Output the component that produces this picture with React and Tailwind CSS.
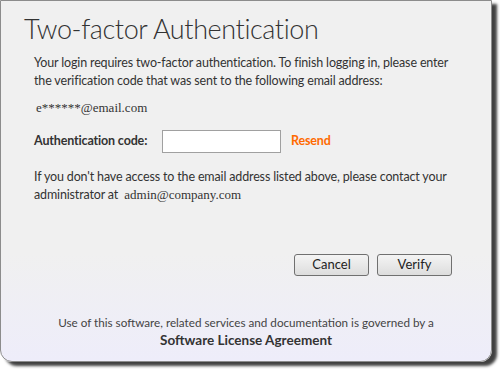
export default function App() {
  return (
    <div className="w-[501px] h-[372px] bg-white overflow-hidden" style={{ fontFamily: 'Lato, sans-serif' }}>
      <div className="w-[492px] h-[362px] border border-[#8c8c8c] rounded-b-[12px] bg-gradient-to-b from-[#f0f0f0] via-[#f0f0f0] via-70% to-[#eeedfa] shadow-[5px_4px_3px_rgba(0,0,0,0.75)] flex flex-col">
        <h1 className="pl-[23px] pt-[10px] text-[27px] tracking-[-0.4px] font-light text-[#333] leading-[36px]">
          Two-factor Authentication
        </h1>
        <div className="pl-[33px] pr-2 text-[12.5px] tracking-[-0.15px] text-[#333] whitespace-nowrap">
          <p className="mt-[7px] leading-[18px]">
            Your login requires two-factor authentication. To finish logging in, please enter<br />
            the verification code that was sent to the following email address:
          </p>
          <p className="mt-[9px] pl-[2px] text-[13px] tracking-normal leading-[18px]" style={{ fontFamily: '"Liberation Serif", serif' }}>
            e******@email.com
          </p>
          <div className="mt-[13px] flex items-center">
            <span className="font-bold w-[128px]">Authentication code:</span>
            <input className="w-[119px] h-[23px] bg-white border border-[#a0a0a0] outline-none" />
            <span className="ml-[10px] font-bold text-[#ff6a00]">Resend</span>
          </div>
          <p className="mt-[15px] leading-[18px]">
            If you don't have access to the email address listed above, please contact your<br />
            administrator at{' '}
            <span className="ml-[3px] text-[13px] tracking-normal" style={{ fontFamily: '"Liberation Serif", serif' }}>admin@company.com</span>
          </p>
        </div>
        <div className="mt-auto flex justify-end gap-[8px] pr-[39px]">
          <button className="w-[75px] h-[22px] rounded-[3px] border border-[#707070] bg-gradient-to-b from-[#f4f4f4] to-[#dddddd] text-[13px] text-[#222]">
            Cancel
          </button>
          <button className="w-[75px] h-[22px] rounded-[3px] border border-[#707070] bg-gradient-to-b from-[#f4f4f4] to-[#dddddd] text-[13px] text-[#222]">
            Verify
          </button>
        </div>
        <div className="mt-[38px] mb-[11px] text-center text-[#444]">
          <p className="text-[11.7px] leading-[17px]">Use of this software, related services and documentation is governed by a</p>
          <p className="text-[13.5px] font-bold leading-[19px] text-[#333]">Software License Agreement</p>
        </div>
      </div>
    </div>
  );
}
